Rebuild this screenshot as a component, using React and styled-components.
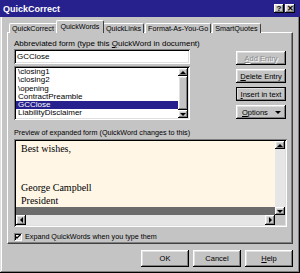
import React from "react";
import styled, { createGlobalStyle } from "styled-components";

const GlobalStyle = createGlobalStyle`
  html, body {
    margin: 0;
    padding: 0;
    background: #c4c4c4;
  }
  body {
    width: 300px;
    height: 273px;
    overflow: hidden;
    font-family: "Liberation Sans", Arial, sans-serif;
    font-size: 7.5px;
    color: #000;
  }
`;

const raised = `
  box-shadow: inset -1px -1px #000, inset 1px 1px #fff,
    inset -2px -2px #808080, inset 2px 2px #dfdfdf;
`;

const sunken = `
  box-shadow: inset 1px 1px #808080, inset -1px -1px #fff,
    inset 2px 2px #000, inset -2px -2px #dfdfdf;
`;

const Window = styled.div`
  width: 300px;
  height: 273px;
  box-sizing: border-box;
  background: #c4c4c4;
  display: flex;
  flex-direction: column;
  box-shadow: inset -1px -1px #000, inset 1px 0 #dfdfdf, inset -2px -2px #808080,
    inset 2px 0 #fff;
`;

const TitleBar = styled.div`
  height: 17px;
  flex: none;
  background: #26218c;
  display: flex;
  align-items: center;
  justify-content: space-between;
  padding: 0 5px 0 3px;
`;

const Title = styled.span`
  color: #fff;
  font-weight: bold;
  font-size: 9px;
`;

const TitleButtons = styled.div`
  display: flex;
  gap: 1px;
`;

const TitleButton = styled.div`
  width: 10px;
  height: 9px;
  background: #c4c4c4;
  ${raised}
  display: flex;
  align-items: center;
  justify-content: center;
  font-weight: bold;
  font-size: 8px;
  line-height: 9px;
`;

const Body = styled.div`
  display: flex;
  flex-direction: column;
  padding: 3px 7px 0 7px;
`;

const TabRow = styled.div`
  display: flex;
  align-items: flex-end;
  height: 13px;
  padding-left: 2px;
  position: relative;
  z-index: 1;
  margin-bottom: -1px;
`;

const Tab = styled.div`
  height: ${(p) => (p.$active ? 13 : 10)}px;
  margin: 0 ${(p) => (p.$active ? -1 : 1)}px 0 ${(p) => (p.$active ? -2 : 0)}px;
  padding: 0 ${(p) => (p.$active ? 3.5 : 2)}px;
  box-sizing: border-box;
  background: #c4c4c4;
  border-top: 1px solid #fff;
  border-left: 1px solid #fff;
  border-right: 1px solid #404040;
  border-radius: 2px 2px 0 0;
  font-size: 7.2px;
  line-height: ${(p) => (p.$active ? 11 : 9)}px;
  white-space: nowrap;
  position: relative;
  z-index: ${(p) => (p.$active ? 2 : 0)};
`;

const Panel = styled.div`
  height: 212px;
  box-sizing: border-box;
  display: flex;
  flex-direction: column;
  padding: 6px 5px 0 6px;
  border-top: 1px solid #fff;
  border-left: 1px solid #fff;
  border-right: 1px solid #404040;
  border-bottom: 1px solid #404040;
  box-shadow: inset -1px -1px #808080;
`;

const TopRow = styled.div`
  display: flex;
  justify-content: space-between;
`;

const LeftCol = styled.div`
  width: 176px;
  display: flex;
  flex-direction: column;
`;

const Label = styled.div`
  height: 9px;
  line-height: 9px;
  font-size: ${(p) => p.$size || 8}px;
  white-space: nowrap;
`;

const TextField = styled.div`
  margin-top: 1px;
  height: 15px;
  line-height: 15px;
  font-size: 8px;
  background: #fff;
  padding-left: 3px;
  ${sunken}
`;

const ListBox = styled.div`
  margin-top: 2px;
  height: 54px;
  box-sizing: border-box;
  background: #fff;
  padding: 2px;
  display: flex;
  ${sunken}
`;

const ListItems = styled.div`
  flex: 1;
`;

const ListItem = styled.div`
  height: 8.3px;
  line-height: 8.3px;
  font-size: 8px;
  padding-left: 2px;
  background: ${(p) => (p.$selected ? "#26218c" : "transparent")};
  color: ${(p) => (p.$selected ? "#fff" : "#000")};
`;

const VScroll = styled.div`
  width: 10px;
  display: flex;
  flex-direction: column;
  background: #e6e6e6;
`;

const HScroll = styled.div`
  height: 10px;
  display: flex;
  background: #e6e6e6;
`;

const ScrollTrack = styled.div`
  flex: 1;
  display: flex;
`;

const Thumb = styled.div`
  flex: 1;
  background: #c4c4c4;
  ${raised}
`;

const ArrowBox = styled.div`
  width: 10px;
  height: ${(p) => (p.$wide ? 10 : 8)}px;
  flex: none;
  background: #c4c4c4;
  ${raised}
  display: flex;
  align-items: center;
  justify-content: center;
`;

const RightCol = styled.div`
  width: 50px;
  margin-right: 1px;
  padding-top: 12px;
  display: flex;
  flex-direction: column;
  gap: 4px;
`;

const Button = styled.div`
  height: ${(p) => p.$h || 14}px;
  width: ${(p) => p.$w || 50}px;
  box-sizing: border-box;
  background: #c4c4c4;
  ${raised}
  display: flex;
  align-items: center;
  justify-content: ${(p) => (p.$split ? "space-between" : "center")};
  padding: ${(p) => (p.$split ? "0 5px 0 6px" : "0")};
  white-space: nowrap;
  color: ${(p) => (p.$disabled ? "#8a8a8a" : "#000")};
  text-shadow: ${(p) => (p.$disabled ? "1px 1px #fff" : "none")};
  outline: ${(p) => (p.$default ? "1px solid #000" : "none")};
  outline-offset: -1px;
`;

const PreviewLabel = styled(Label)`
  margin-top: 8px;
`;

const PreviewBox = styled.div`
  margin-top: 2px;
  height: 88px;
  box-sizing: border-box;
  padding: 2px;
  display: grid;
  grid-template-columns: 1fr 10px;
  grid-template-rows: 1fr 10px;
  ${sunken}
  background: #c4c4c4;
`;

const DocArea = styled.div`
  display: flex;
  flex-direction: column;
  min-width: 0;
`;

const Page = styled.div`
  flex: 1;
  background: #fff6e6;
  font-family: "Liberation Serif", "Times New Roman", serif;
  font-size: 10px;
  line-height: 13px;
  padding: 1px 5px 0;
`;

const PageGap = styled.div`
  height: 8px;
  background: #6c6c6c;
`;

const Corner = styled.div`
  background: #c4c4c4;
`;

const CheckRow = styled.div`
  margin-top: 5px;
  display: flex;
  align-items: center;
  gap: 3px;
  height: 9px;
  font-size: 7.2px;
`;

const CheckBox = styled.div`
  width: 8px;
  height: 8px;
  background: #fff;
  ${sunken}
  display: flex;
  align-items: center;
  justify-content: center;
`;

const Footer = styled.div`
  margin-top: 6px;
  display: flex;
  justify-content: flex-end;
  gap: 4px;
`;

const Arrow = ({ dir }) => {
  const pts = {
    up: "0,3 3,0 6,3",
    down: "0,0 6,0 3,3",
    left: "3,0 3,6 0,3",
    right: "0,0 0,6 3,3",
  }[dir];
  const vertical = dir === "up" || dir === "down";
  return (
    <svg
      width={vertical ? 6 : 3}
      height={vertical ? 3 : 6}
      viewBox={vertical ? "0 0 6 3" : "0 0 3 6"}
    >
      <polygon points={pts} fill="#000" />
    </svg>
  );
};

const items = [
  "\\closing1",
  "\\closing2",
  "\\opening",
  "ContractPreamble",
  "GCClose",
  "LiabilityDisclaimer",
];

const tabs = ["QuickCorrect", "QuickWords", "QuickLinks", "Format-As-You-Go", "SmartQuotes"];

export default function App() {
  return (
    <>
      <GlobalStyle />
      <Window>
        <TitleBar>
          <Title>QuickCorrect</Title>
          <TitleButtons>
            <TitleButton>?</TitleButton>
            <TitleButton>✕</TitleButton>
          </TitleButtons>
        </TitleBar>
        <Body>
          <TabRow>
            {tabs.map((t) => (
              <Tab key={t} $active={t === "QuickWords"}>
                {t}
              </Tab>
            ))}
          </TabRow>
          <Panel>
            <TopRow>
              <LeftCol>
                <Label>
                  Abbreviated form (type this <u>Q</u>uickWord in document)
                </Label>
                <TextField>GCClose</TextField>
                <ListBox>
                  <ListItems>
                    {items.map((it) => (
                      <ListItem key={it} $selected={it === "GCClose"}>
                        {it}
                      </ListItem>
                    ))}
                  </ListItems>
                  <VScroll>
                    <ArrowBox>
                      <Arrow dir="up" />
                    </ArrowBox>
                    <ScrollTrack>
                      <Thumb />
                    </ScrollTrack>
                    <ArrowBox>
                      <Arrow dir="down" />
                    </ArrowBox>
                  </VScroll>
                </ListBox>
              </LeftCol>
              <RightCol>
                <Button $disabled>
                  <span>
                    <u>A</u>dd Entry
                  </span>
                </Button>
                <Button>
                  <span>
                    <u>D</u>elete Entry
                  </span>
                </Button>
                <Button $default>
                  <span>
                    <u>I</u>nsert in text
                  </span>
                </Button>
                <Button $split>
                  <span>
                    <u>O</u>ptions
                  </span>
                  <Arrow dir="down" />
                </Button>
              </RightCol>
            </TopRow>
            <PreviewLabel $size={7.2}>
              Preview of expanded form (QuickWord changes to this)
            </PreviewLabel>
            <PreviewBox>
              <DocArea>
                <Page>
                  Best wishes,
                  <br />
                  <br />
                  <br />
                  George Campbell
                  <br />
                  President
                </Page>
                <PageGap />
              </DocArea>
              <VScroll>
                <ArrowBox>
                  <Arrow dir="up" />
                </ArrowBox>
                <ScrollTrack />
                <ArrowBox>
                  <Arrow dir="down" />
                </ArrowBox>
              </VScroll>
              <HScroll>
                <ArrowBox $wide>
                  <Arrow dir="left" />
                </ArrowBox>
                <ScrollTrack />
                <ArrowBox $wide>
                  <Arrow dir="right" />
                </ArrowBox>
              </HScroll>
              <Corner />
            </PreviewBox>
            <CheckRow>
              <CheckBox>
                <svg width="6" height="5" viewBox="0 0 6 5">
                  <polyline
                    points="0.5,2.5 2,4 5.5,0.5"
                    fill="none"
                    stroke="#000"
                    strokeWidth="1.3"
                  />
                </svg>
              </CheckBox>
              <span>Expand QuickWords when you type them</span>
            </CheckRow>
          </Panel>
          <Footer>
            <Button $h={17} $w={48}>
              OK
            </Button>
            <Button $h={17} $w={48}>
              Cancel
            </Button>
            <Button $h={17} $w={48}>
              <span>
                <u>H</u>elp
              </span>
            </Button>
          </Footer>
        </Body>
      </Window>
    </>
  );
}
